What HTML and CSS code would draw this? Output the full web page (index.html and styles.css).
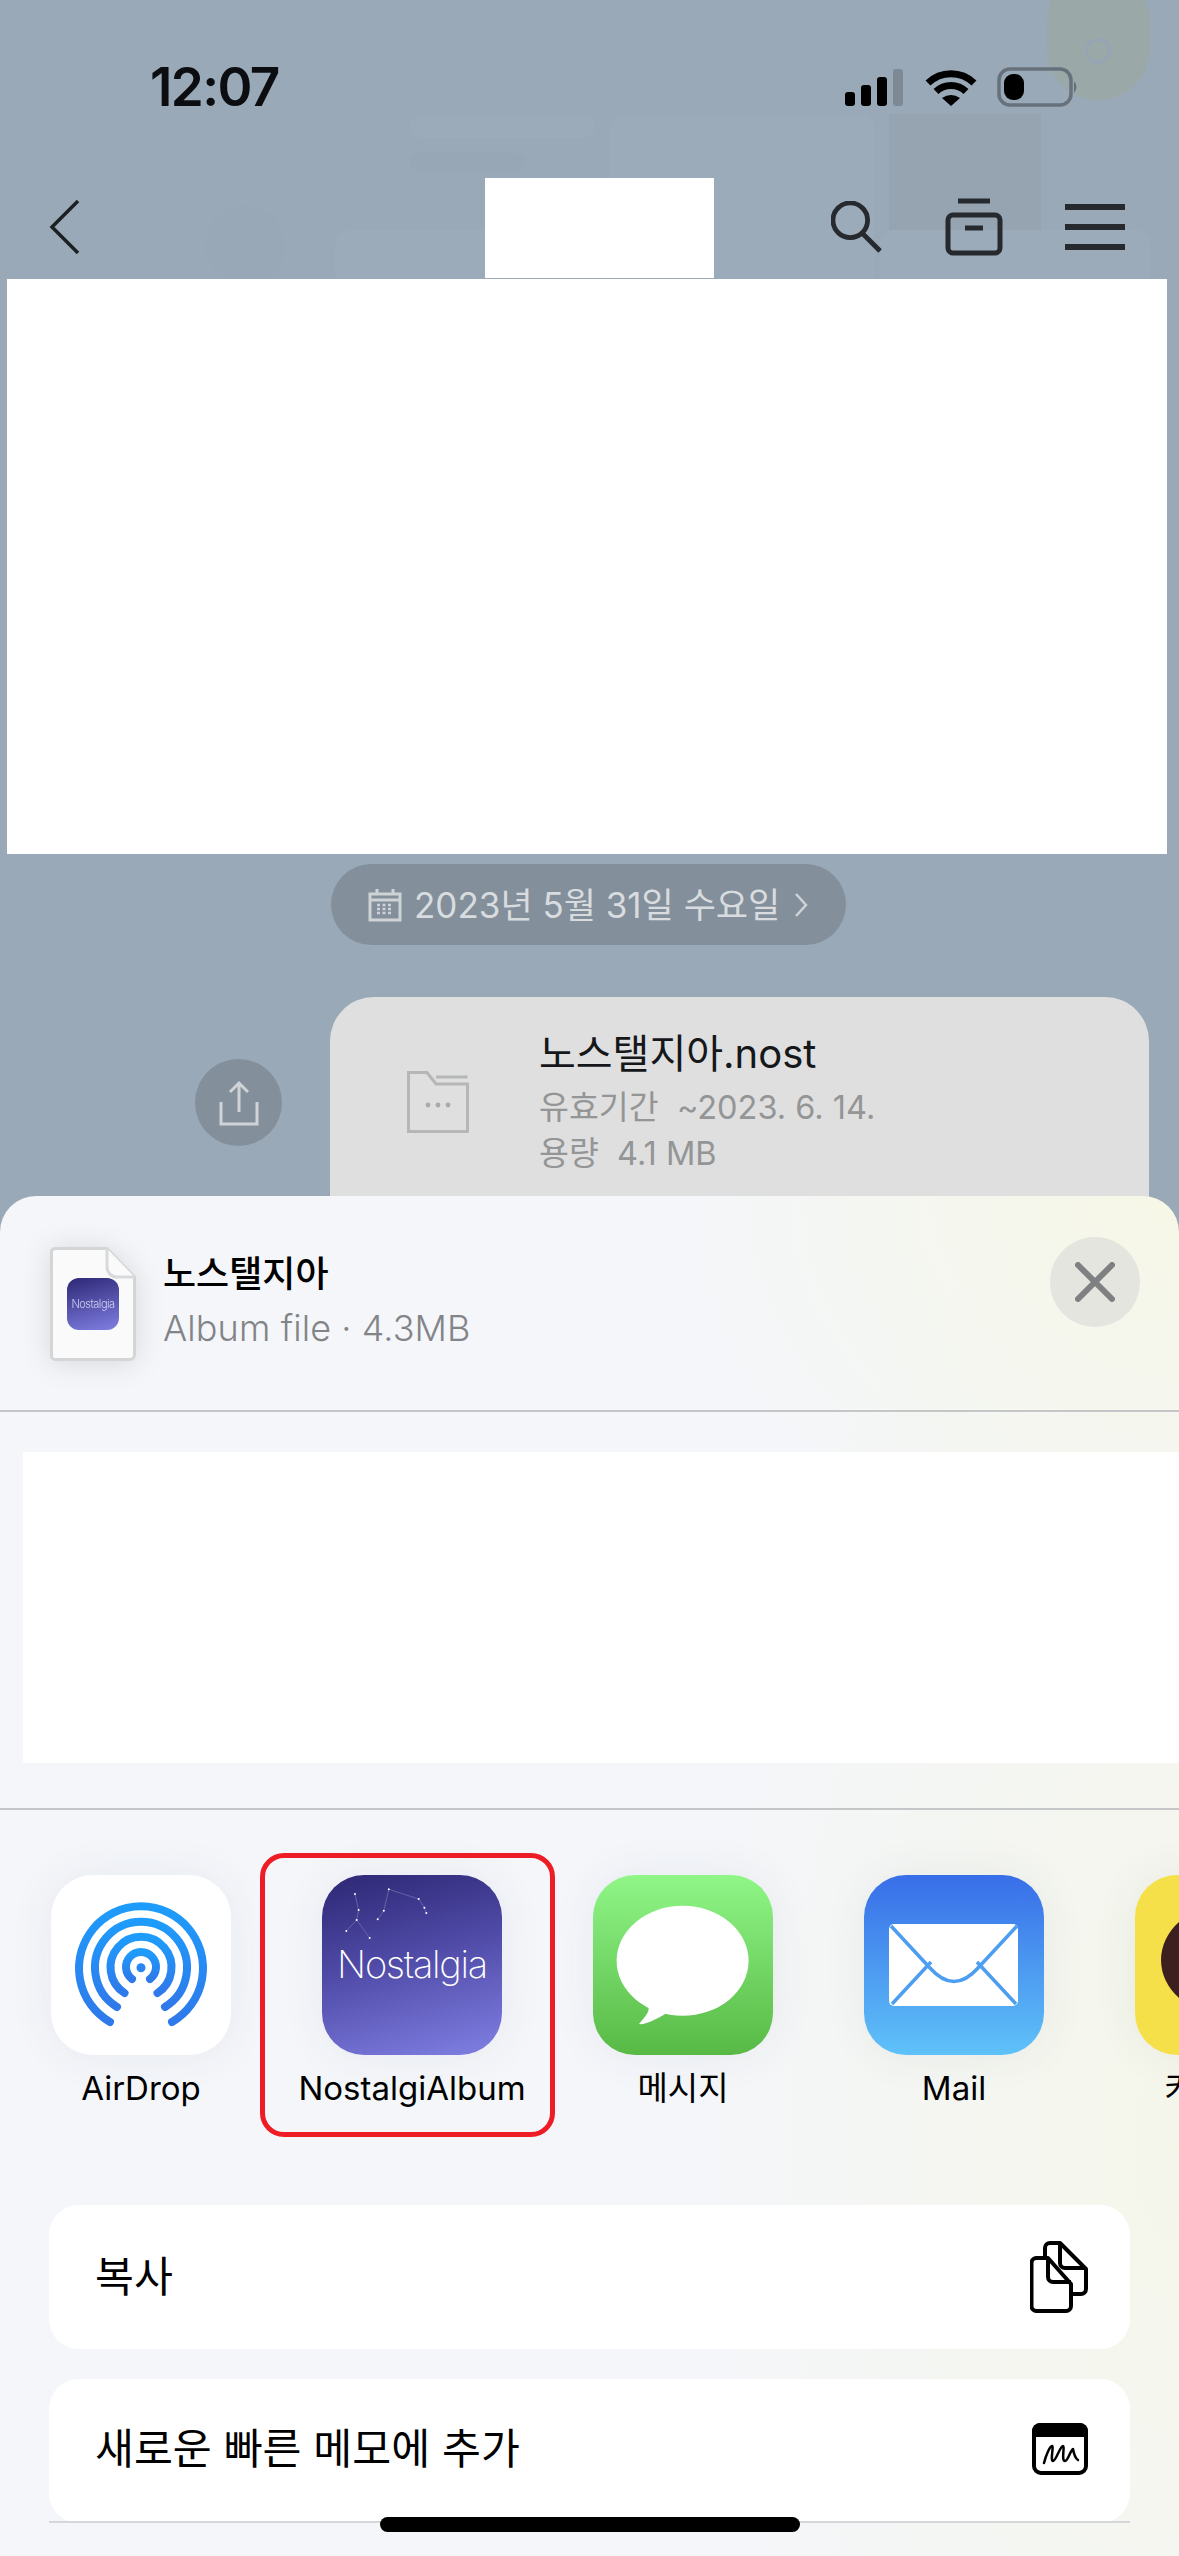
FILE: index.html
```html
<!DOCTYPE html>
<html lang="ko">
<head>
<meta charset="utf-8">
<title>공유</title>
<link rel="stylesheet" href="styles.css">
</head>
<body>
<div class="phone">
  <div class="ghosts" aria-hidden="true">
    <div class="ghost g-a"></div><div class="ghost g-b"></div><div class="ghost g-c"></div>
    <div class="ghost g-d"></div><div class="ghost g-e"></div><div class="ghost g-f"></div>
    <div class="ghost g-g"></div><div class="ghost g-h"></div>
    <div class="ghost g-ring"></div>
  </div>

  <header class="status">
    <span class="time">12:07</span>
    <div class="status-icons">
      <svg class="ic-signal" width="58" height="37" viewBox="0 0 58 37"><rect x="0" y="23" width="10" height="14" rx="3"/><rect x="16" y="16" width="10" height="21" rx="3"/><rect x="32" y="8" width="10" height="29" rx="3"/><rect class="dim" x="48" y="0" width="10" height="37" rx="3"/></svg>
      <svg class="ic-wifi" width="52" height="37" viewBox="0 0 52 37"><path class="wifi-arc" d="M3 14A33 33 0 0 1 49 14"/><path class="wifi-arc" d="M11 22.500A21.500 21.500 0 0 1 41 22.500"/><path d="M17 29Q26 23 35 29L26 37Z"/></svg>
      <svg class="ic-batt" width="83" height="40" viewBox="0 0 83 40"><rect class="batt-frame" x="2" y="2" width="72" height="36" rx="11"/><rect x="7" y="7" width="20" height="26" rx="9"/><path class="batt-tip" d="M77 14Q82 20 77 26Z"/></svg>
    </div>
  </header>

  <nav class="nav">
    <svg class="ic-back" width="32" height="56" viewBox="0 0 32 56"><path d="M29 2L3 28L29 54"/></svg>
    <div class="title-block"></div>
    <div class="nav-icons">
      <svg class="line-ic" width="52" height="52" viewBox="0 0 54 54"><circle cx="20" cy="20" r="18"/><path d="M32 33L51 52"/></svg>
      <svg class="line-ic" width="58" height="58" viewBox="0 0 58 58"><path d="M13 3H45M20 30H38"/><rect x="3" y="17" width="52" height="38" rx="5"/></svg>
      <svg class="line-ic" width="60" height="46" viewBox="0 0 60 46"><path class="bars" d="M0 3H60M0 23H60M0 43H60"/></svg>
    </div>
  </nav>

  <div class="hidden-block"></div>

  <div class="date-pill">
    <svg width="34" height="34" viewBox="0 0 34 34"><path class="cal" d="M2 6H32V32H2ZM2 12H32M9 1V6M25 1V6"/><path class="cal-dots" d="M9 17H25M9 21H25M9 25H25"/></svg>
    <span class="date-text">2023년 5월 31일 수요일</span>
    <svg class="date-chev" width="14" height="26" viewBox="0 0 14 26"><path d="M2 2L12 13L2 24"/></svg>
  </div>

  <section class="msg-row">
    <div class="share-btn">
      <svg width="40" height="46" viewBox="0 0 40 46"><path d="M20 32V3M11 12L20 3L29 12M2 22V44H38V22"/></svg>
    </div>
    <div class="bubble">
      <svg class="folder" width="62" height="62" viewBox="0 0 62 62"><path d="M1.500 60.500V1.500H20L29 13H60.500V60.500Z"/><path d="M29 6H60.500"/><circle class="dot" cx="21" cy="34" r="2.400"/><circle class="dot" cx="31" cy="34" r="2.400"/><circle class="dot" cx="41" cy="34" r="2.400"/></svg>
      <div class="bubble-text">
        <div class="file-name">노스탤지아.nost</div>
        <div class="file-meta">유효기간&nbsp; ~2023. 6. 14.</div>
        <div class="file-meta">용량&nbsp; 4.1 MB</div>
      </div>
    </div>
  </section>

  <section class="sheet">
    <div class="sheet-head">
      <div class="doc">
        <svg class="doc-shape" width="86" height="114" viewBox="0 0 86 114"><path class="doc-body" d="M5 1.500H57L84.500 30V108A4.500 4.500 0 0 1 80 112.500H5A3.500 3.500 0 0 1 1.500 109V5A3.500 3.500 0 0 1 5 1.500Z"/><path class="doc-fold" d="M57 1.500V20A10 10 0 0 0 67 30H84.500"/></svg>
        <div class="doc-app"><span class="doc-app-name">Nostalgia</span></div>
      </div>
      <div class="head-text">
        <div class="head-title">노스탤지아</div>
        <div class="head-sub">Album file · 4.3MB</div>
      </div>
      <button class="close" aria-label="닫기">
        <svg width="40" height="40" viewBox="0 0 40 40"><path d="M3 3L37 37M37 3L3 37"/></svg>
      </button>
    </div>

    <div class="contacts"></div>

    <div class="apps">
      <div class="app">
        <div class="app-icon airdrop">
          <svg width="180" height="180" viewBox="0 0 180 180">
            <defs><linearGradient id="ad" x1="0" y1="0" x2="0" y2="1"><stop offset="0" stop-color="#1e9cfb"/><stop offset="1" stop-color="#2f79ea"/></linearGradient></defs>
            <g class="air" stroke="url(#ad)">
              <path d="M59 147A62 62 0 1 1 121 147"/>
              <path d="M66 132A46 46 0 1 1 114 132"/>
              <path d="M73.500 118A30.500 30.500 0 1 1 106.500 118"/>
              <path d="M81 104A15 15 0 1 1 99 104"/>
            </g>
            <circle cx="90" cy="92.700" r="4.500" fill="#2a86f0"/>
          </svg>
        </div>
        <div class="app-label">AirDrop</div>
      </div>

      <div class="app selected">
        <div class="app-icon nostalgia">
          <svg class="stars" width="180" height="180" viewBox="0 0 180 180">
            <path class="star-line" d="M33 19L36.600 35L34.700 45L24.300 56M34.700 45L47.700 63M66.800 14.300L96.700 24L102.400 32.700L104.300 38M66.800 14.300L61.800 35.700L55.700 44.300"/>
            <g class="star-dot"><circle cx="33" cy="19" r="1"/><circle cx="36.600" cy="35" r="1"/><circle cx="34.700" cy="45" r="1"/><circle cx="24.300" cy="56" r="1"/><circle cx="47.700" cy="63" r="1"/><circle cx="66.800" cy="14.300" r="1"/><circle cx="96.700" cy="24" r="1"/><circle cx="102.400" cy="32.700" r="1"/><circle cx="104.300" cy="38" r="1"/><circle cx="61.800" cy="35.700" r="1"/><circle cx="55.700" cy="44.300" r="1"/></g>
          </svg>
          <span class="nostalgia-name">Nostalgia</span>
        </div>
        <div class="app-label">NostalgiAlbum</div>
      </div>

      <div class="app">
        <div class="app-icon messages">
          <svg width="180" height="180" viewBox="0 0 180 180"><ellipse cx="89.600" cy="85.800" rx="66" ry="55" fill="#fff"/><path fill="#fff" d="M52 128C58 133 57 137 46 149C52 150 62 145 74 138Z"/></svg>
        </div>
        <div class="app-label">메시지</div>
      </div>

      <div class="app">
        <div class="app-icon mail">
          <svg width="180" height="180" viewBox="0 0 180 180"><rect x="25" y="49" width="129" height="82" rx="5" fill="#fff"/><path class="mail-line" d="M27 51L66 93Q78 106.500 90 106.500Q102 106.500 114 93L153 51M28 129L67 87M152 129L113 87"/></svg>
        </div>
        <div class="app-label">Mail</div>
      </div>

      <div class="app">
        <div class="app-icon kakao">
          <div class="kakao-face"></div>
        </div>
        <div class="app-label">카카오톡</div>
      </div>
    </div>

    <div class="action-card">
      <div class="action">
        <span class="action-label">복사</span>
        <svg class="action-ic" width="58" height="72" viewBox="0 0 58 72">
          <path d="M15 16V7A5 5 0 0 1 20 2H30L56 28V48A5 5 0 0 1 51 53H42"/><path d="M30 2V22A5 5 0 0 0 35 27H56"/>
          <path class="white-fill" d="M6 17H18L41 43V65A5 5 0 0 1 36 70H6A5 5 0 0 1 1.500 65V22A5 5 0 0 1 6 17Z"/><path d="M18 17V36A5 5 0 0 0 23 41H41"/>
        </svg>
      </div>
    </div>

    <div class="action-card">
      <div class="action action-memo">
        <span class="action-label">새로운 빠른 메모에 추가</span>
        <svg class="action-ic" width="56" height="52" viewBox="0 0 56 52">
          <path class="memo-top" d="M8 0H48A8 8 0 0 1 56 8V14H0V8A8 8 0 0 1 8 0Z"/>
          <rect x="2" y="2" width="52" height="48" rx="7"/>
          <path class="memo-sign" d="M12 40C14 32 18 23 20 23C22 23 18 38 21 38C24 38 28 23 31 23C33 23 29 38 33 38C36 38 38 28 41 26C42 32 43 35 46 37"/>
        </svg>
      </div>
    </div>
    <div class="home-indicator"></div>
  </section>
</div>
</body>
</html>
```

FILE: styles.css
```css
*, *::before, *::after { box-sizing: border-box; }
html, body { margin: 0; padding: 0; }
body { font-family: Inter, "Noto Sans CJK KR", sans-serif; }
svg { display: block; flex: none; }

.phone {
  position: relative;
  width: 1179px;
  height: 2556px;
  overflow: hidden;
  background: #9aa9b7;
}

/* blurred content showing through the dimmed layer */
.ghosts { position: absolute; inset: 0; }
.ghost { position: absolute; background: #9cabb9; border-radius: 14px; }
.g-a { left: 610px; top: 115px; width: 265px; height: 170px; }
.g-b { left: 889px; top: 114px; width: 152px; height: 116px; background: #96a3b0; border-radius: 0; }
.g-c { left: 880px; top: 230px; width: 270px; height: 60px; }
.g-d { left: 335px; top: 230px; width: 265px; height: 60px; }
.g-e { left: 410px; top: 115px; width: 185px; height: 23px; }
.g-f { left: 410px; top: 153px; width: 115px; height: 19px; background: #98a7b5; }
.g-g { left: 205px; top: 205px; width: 80px; height: 80px; border-radius: 40px; background: #99a8b6; }
.g-h { left: 1047px; top: -30px; width: 103px; height: 130px; border-radius: 52px; background: #9ba8a8; }
.g-ring { left: 1085px; top: 38px; width: 26px; height: 26px; border: 3px solid #95a5b5; border-radius: 50%; background: none; }

/* status bar */
.status {
  position: relative;
  height: 178px;
  padding: 60px 104px 0 150px;
  display: flex;
  justify-content: space-between;
  align-items: flex-start;
}
.time {
  font-size: 53px;
  line-height: 54px;
  font-weight: 600;
  letter-spacing: -1.600px;
  color: #0b0d10;
}
.status-icons { display: flex; align-items: flex-start; margin-top: 7px; }
.ic-signal { margin-top: 2px; fill: #000; }
.ic-signal .dim { fill: #7d8995; }
.ic-wifi { margin: 2px 0 0 22px; fill: #000; }
.wifi-arc { fill: none; stroke: #000; stroke-width: 7; }
.ic-batt { margin: 0 -5px 0 20px; fill: #000; }
.batt-frame { fill: none; stroke: #67717b; stroke-width: 3.500; }
.batt-tip { fill: #67717b; }

/* nav */
.nav {
  position: relative;
  height: 101px;
  padding: 0 54px 4px 49px;
  display: flex;
  align-items: center;
}
.ic-back path { fill: none; stroke: #1d2023; stroke-width: 3.500; }
.title-block { align-self: flex-start; width: 229px; height: 100px; margin-left: 404px; background: #fff; }
.nav-icons { margin-left: auto; display: flex; align-items: center; gap: 62px; }
.line-ic { fill: none; stroke: #26292d; stroke-width: 5; stroke-linejoin: round; }
.line-ic .bars { stroke-width: 6; }

.hidden-block { position: relative; height: 575px; margin: 0 12px 0 7px; background: #fff; }

/* date */
.date-pill {
  position: relative;
  width: 515px;
  height: 81px;
  margin: 10px 0 0 331px;
  padding-left: 37px;
  border-radius: 41px;
  background: #838f9b;
  display: flex;
  align-items: center;
  color: #d9dcdf;
}
.cal { fill: none; stroke: #d0d3d6; stroke-width: 3; }
.cal-dots { fill: none; stroke: #d0d3d6; stroke-width: 2.500; stroke-dasharray: 3 2.500; }
.date-text { margin-left: 12px; font-size: 35px; line-height: 44px; font-weight: 400; white-space: nowrap; }
.date-chev { margin-left: 14px; fill: none; stroke: #d0d3d6; stroke-width: 2.500; }

/* message */
.msg-row {
  position: relative;
  margin-top: 52px;
  padding-left: 195px;
  display: flex;
  align-items: flex-start;
  gap: 48px;
}
.share-btn {
  width: 87px;
  height: 87px;
  margin-top: 62px;
  border-radius: 50%;
  background: #838f9b;
  display: flex;
  align-items: center;
  justify-content: center;
}
.share-btn path { fill: none; stroke: #cfd3d7; stroke-width: 3; }
.bubble {
  width: 819px;
  height: 250px;
  border-radius: 44px;
  background: #dfdfdf;
  padding: 34px 0 0 77px;
  display: flex;
  align-items: flex-start;
}
.folder { margin-top: 40px; fill: none; stroke: #b5b6b7; stroke-width: 3; }
.folder .dot { fill: #a8a9aa; stroke: none; }
.bubble-text { margin-left: 70px; }
.file-name { font-size: 40px; line-height: 46px; color: #15171a; white-space: nowrap; margin-bottom: 8px; }
.file-meta { font-size: 32.500px; line-height: 46px; color: #949596; white-space: nowrap; }

/* share sheet */
.sheet {
  position: absolute;
  left: 0;
  right: 0;
  top: 1196px;
  bottom: 0;
  overflow: hidden;
  border-radius: 36px 36px 0 0;
  background:
    radial-gradient(520px 420px at 100% 0, #f6f7e6 0, rgba(246,247,230,0) 100%),
    radial-gradient(500px 1000px at 100% 70%, #f5f6ea 0, rgba(245,246,234,0) 100%),
    #f4f6fa;
}
.sheet-head {
  height: 216px;
  padding: 41px 39px 0 50px;
  border-bottom: 2px solid #c4c6c7;
  display: flex;
  align-items: flex-start;
}
.doc { position: relative; width: 86px; height: 114px; margin-top: 10px; flex: none; filter: drop-shadow(0 2px 14px rgba(0,0,0,.12)); }
.doc-body { fill: #fafafb; stroke: #d4d5d7; stroke-width: 3; }
.doc-fold { fill: #fafafb; stroke: #d8d9db; stroke-width: 3; }
.doc-app {
  position: absolute;
  left: 17px;
  top: 31px;
  width: 52px;
  height: 52px;
  border-radius: 12px;
  background: linear-gradient(165deg, #2d2774 0, #8080e4 100%);
  display: flex;
  align-items: center;
  justify-content: center;
  overflow: hidden;
}
.doc-app-name { font-size: 11px; letter-spacing: -.5px; color: #cfcff0; font-weight: 300; }
.head-text { margin-left: 27px; flex: 1; padding-top: 12px; }
.head-title { font-size: 36px; line-height: 50px; font-weight: 500; color: #000; }
.head-sub { margin-top: 7px; font-size: 36px; line-height: 44px; font-weight: 300; letter-spacing: .1px; color: #838487; white-space: nowrap; }
.close {
  width: 90px;
  height: 90px;
  padding: 0;
  border: 0;
  border-radius: 50%;
  background: #e4e5df;
  display: flex;
  align-items: center;
  justify-content: center;
}
.close path { fill: none; stroke: #7f8081; stroke-width: 6; stroke-linecap: round; }

.contacts { height: 311px; margin: 40px 0 0 23px; background: #fff; }

.apps {
  height: 397px;
  margin-top: 45px;
  padding: 65px 0 0 51px;
  border-top: 2px solid #c4c6c7;
  display: flex;
  gap: 91px;
  overflow: hidden;
}
.app { position: relative; width: 180px; flex: none; }
.app.selected::after {
  content: "";
  position: absolute;
  left: -62px;
  top: -22px;
  width: 295px;
  height: 284px;
  border: 5px solid #ee1c25;
  border-radius: 24px;
}
.app-icon {
  position: relative;
  width: 180px;
  height: 180px;
  border-radius: 42px;
  overflow: hidden;
  box-shadow: 0 0 46px rgba(60,70,80,.07);
}
.app-label {
  margin: 11px -60px 0;
  font-size: 33px;
  line-height: 44px;
  text-align: center;
  white-space: nowrap;
  color: #000;
  font-weight: 400;
}
.airdrop { background: #fff; }
.air path { fill: none; stroke-width: 8; stroke-linecap: round; }
.nostalgia { background: linear-gradient(165deg, #2d2774 0, #4f4aa6 45%, #8080e4 100%); }
.stars { position: absolute; left: 0; top: 0; }
.star-line { fill: none; stroke: #6f6db0; stroke-width: .8; }
.star-dot { fill: #fff; }
.nostalgia-name {
  position: absolute;
  left: 0;
  right: 0;
  top: 64px;
  text-align: center;
  font-family: Inter, sans-serif;
  font-weight: 200;
  font-size: 38px;
  line-height: 50px;
  letter-spacing: -1.300px;
  color: #fff;
}
.messages { background: linear-gradient(180deg, #8ff687 0, #58b945 100%); }
.mail { background: linear-gradient(180deg, #386ee8 0, #5fc2f9 100%); }
.mail-line { fill: none; stroke: #4d9df0; stroke-width: 3.500; }
.kakao { background: #f6e04a; }
.kakao-face {
  position: absolute;
  left: 26px;
  top: 30px;
  width: 130px;
  height: 110px;
  border-radius: 50%;
  background: #3d1f1f;
}
.kakao-face::after {
  content: "";
  position: absolute;
  left: 18px;
  top: 40px;
  width: 6px;
  height: 6px;
  border-radius: 50%;
  background: #f6e04a;
}

.action-card {
  height: 144px;
  margin: 0 49px 30px;
  border-radius: 30px;
  background: #fff;
}
.action-card:last-of-type { height: 280px; margin-bottom: 0; }
.action {
  height: 144px;
  padding: 0 42px 0 46px;
  display: flex;
  align-items: center;
  justify-content: space-between;
}
.action-memo { border-bottom: 2px solid #d6d7da; padding-bottom: 2px; }
.action-label { font-size: 42.300px; line-height: 50px; color: #000; }
.action-ic { fill: none; stroke: #000; stroke-width: 4; stroke-linejoin: round; }
.white-fill { fill: #fff; }
.memo-top { fill: #000; stroke: none; }
.memo-sign { stroke-width: 2.500; stroke-linecap: round; stroke-linejoin: round; }
.home-indicator {
  position: absolute;
  left: 380px;
  bottom: 24px;
  width: 420px;
  height: 15px;
  border-radius: 8px;
  background: #000;
}
```
